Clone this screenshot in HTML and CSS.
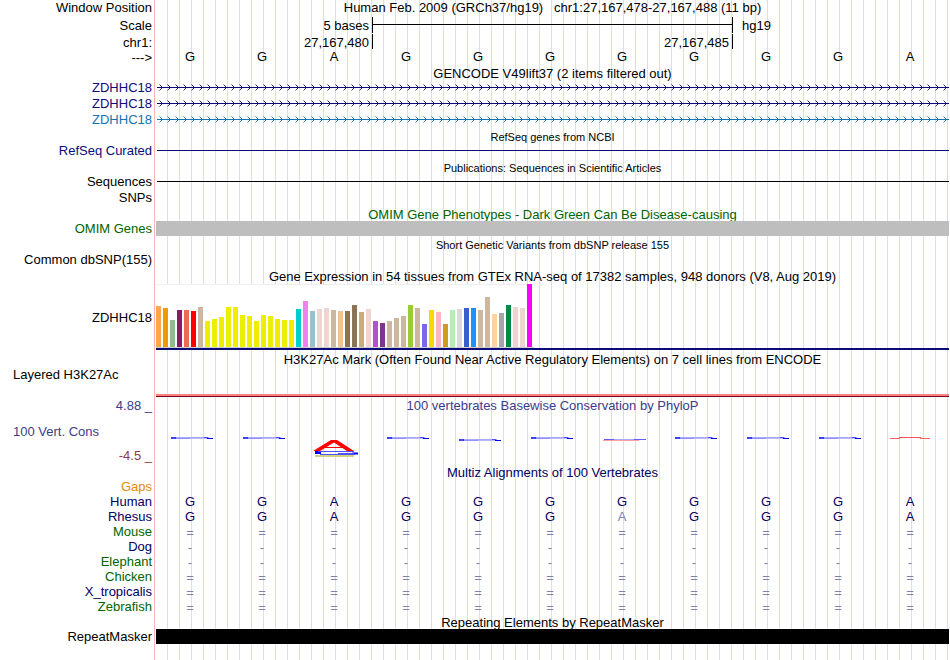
FILE: index.html
```html
<!DOCTYPE html>
<html lang="en">
<head>
<meta charset="utf-8">
<title>Human chr1:27,167,478-27,167,488</title>
<link rel="stylesheet" href="styles.css">
</head>
<body>
<main class="browser">
  <div class="row h17"><div class="label">Window Position</div><h1 class="plot title">Human Feb. 2009 (GRCh37/hg19) &nbsp; chr1:27,167,478-27,167,488 (11 bp)</h1></div>
  <div class="row h17 low"><div class="label">Scale</div><div class="plot ruler"><div class="mark">5 bases</div><div class="span"></div><div class="assembly">hg19</div></div></div>
  <div class="row h15 low"><div class="label">chr1:</div><div class="plot ruler"><div class="mark">27,167,480</div><div class="mark tick">27,167,485</div><div class="tick"></div></div></div>
  <div class="row h16"><div class="label low">---&gt;</div><div class="plot bases" data-bases="GGAGGGGGGGA"></div></div>
  <div class="row h15"><div></div><h2 class="plot title">GENCODE V49lift37 (2 items filtered out)</h2></div>
  <div class="row h16 navy"><div class="label">ZDHHC18</div><div class="plot gene"></div></div>
  <div class="row h16 navy"><div class="label">ZDHHC18</div><div class="plot gene"></div></div>
  <div class="row h16 teal"><div class="label">ZDHHC18</div><div class="plot gene"></div></div>
  <div class="row h15"><div></div><h2 class="plot title small">RefSeq genes from NCBI</h2></div>
  <div class="row h16 navy"><div class="label">RefSeq Curated</div><div class="plot line"></div></div>
  <div class="row h15"><div></div><h2 class="plot title small">Publications: Sequences in Scientific Articles</h2></div>
  <div class="row h16"><div class="label">Sequences</div><div class="plot line"></div></div>
  <div class="row h16"><div class="label">SNPs</div><div class="plot"></div></div>
  <div class="row h15 green"><div></div><h2 class="plot title">OMIM Gene Phenotypes - Dark Green Can Be Disease-causing</h2></div>
  <div class="row h15 green"><div class="label">OMIM Genes</div><div class="plot block gray"></div></div>
  <div class="row h16"><div></div><h2 class="plot title small">Short Genetic Variants from dbSNP release 155</h2></div>
  <div class="row h16"><div class="label">Common dbSNP(155)</div><div class="plot"></div></div>
  <div class="row h16"><div></div><h2 class="plot title">Gene Expression in 54 tissues from GTEx RNA-seq of 17382 samples, 948 donors (V8, Aug 2019)</h2></div>
  <div class="row expression"><div class="label">ZDHHC18</div><div class="plot"><div class="chart" id="chart"></div></div></div>
  <div class="row h15"><div></div><h2 class="plot title">H3K27Ac Mark (Often Found Near Active Regulatory Elements) on 7 cell lines from ENCODE</h2></div>
  <div class="row histone low"><div class="label wide">Layered H3K27Ac</div><div class="plot signal"></div></div>
  <div class="row conservation">
    <div class="scale"><div class="label low">4.88 _</div><div class="label wide">100 Vert. Cons</div><div class="label minimum">-4.5 _</div></div>
    <div class="plot"><h2 class="title">100 vertebrates Basewise Conservation by PhyloP</h2><div class="bases logo" id="logo"></div></div>
  </div>
  <div class="row h15 ink"><div></div><h2 class="plot title">Multiz Alignments of 100 Vertebrates</h2></div>
  <div class="row h15 orange"><div class="label">Gaps</div><div class="plot"></div></div>
  <div class="row h15 ink"><div class="label">Human</div><div class="plot bases" data-bases="GGAGGGGGGGA"></div></div>
  <div class="row h15 ink"><div class="label">Rhesus</div><div class="plot bases" data-bases="GGAGGGaGGGA"></div></div>
  <div class="row h15 green"><div class="label">Mouse</div><div class="plot bases" data-bases="==========="></div></div>
  <div class="row h15 ink"><div class="label">Dog</div><div class="plot bases" data-bases="-----------"></div></div>
  <div class="row h15 green"><div class="label">Elephant</div><div class="plot bases" data-bases="-----------"></div></div>
  <div class="row h15 green"><div class="label">Chicken</div><div class="plot bases" data-bases="==========="></div></div>
  <div class="row h15 ink"><div class="label">X_tropicalis</div><div class="plot bases" data-bases="==========="></div></div>
  <div class="row h15 green"><div class="label">Zebrafish</div><div class="plot bases" data-bases="==========="></div></div>
  <div class="row h15"><div></div><h2 class="plot title">Repeating Elements by RepeatMasker</h2></div>
  <div class="row h15"><div class="label">RepeatMasker</div><div class="plot block black"></div></div>
</main>
<script src="script.js"></script>
</body>
</html>
```
FILE: styles.css
```css
* { box-sizing: border-box; }
body {
  margin: 0;
  background: #fff;
  color: #000;
  font: 13px/16px "Liberation Sans", Arial, sans-serif;
}
.browser {
  display: flex;
  flex-direction: column;
  min-height: 100vh;
  padding-right: 1px;
  background:
    linear-gradient(#ffb4b4, #ffb4b4) 154px 0 / 1px 100% no-repeat,
    repeating-linear-gradient(to right, transparent 0 11px, #dcdcfa 11px 12px) 156px 0 / calc(100% - 157px) 100% no-repeat;
}
.row {
  display: grid;
  grid-template-columns: 156px minmax(0, 1fr);
  grid-template-rows: 100%;
  flex: none;
}
.h15 { height: 15px; }
.h16 { height: 16px; }
.h17 { height: 17px; }
.low { line-height: 18px; }
.label { padding-right: 4px; text-align: right; white-space: nowrap; }
.label.wide { padding-left: 13px; text-align: left; }
.title { margin: 0; font-size: 13px; font-weight: 400; text-align: center; white-space: nowrap; }
h2.title { line-height: 18px; }
h2.small { font-size: 11px; }

.navy { color: #0c0c78; }
.teal { color: #1474b0; }
.green { color: #006400; }
.ink { color: #000064; }
.orange { color: #e68a00; }

.ruler {
  display: grid;
  grid-template-columns: 3fr 5fr 3fr;
  grid-template-rows: 100%;
  margin-right: 1px;
}
.mark { padding-right: 3px; text-align: right; }
.span {
  height: 16px;
  border-left: 1px solid #000;
  background: linear-gradient(#000, #000) 0 7px / 100% 1px no-repeat;
}
.assembly, .tick { border-left: 1px solid #000; }
.assembly { height: 16px; padding-left: 9px; }

.bases {
  display: grid;
  grid-template-columns: repeat(11, 1fr);
  margin: 0 3px 0 -2px;
  text-align: center;
}
.faint, .mismatch { color: #8080b0; }
.faint { line-height: 18px; }

.gene, .line { margin-left: 1px; }
.gene svg { display: block; width: 100%; height: 16px; }
.line { background: linear-gradient(currentColor, currentColor) 0 7px / 100% 1px no-repeat; }
.gray { background: #bebebe; }
.black { background: #000; }

.expression { height: 67px; align-items: center; }
.expression .plot { align-self: start; border-bottom: 2px solid #0c0c78; }
.chart {
  display: flex;
  align-items: flex-end;
  gap: 2px;
  width: 378px;
  height: 64px;
  border-bottom: 1px solid #ccc;
  background: linear-gradient(#eee, #eee) 0 0 / 100% 1px no-repeat #fff;
}
.bar { width: 5px; }

.histone { height: 31px; }
.signal { align-self: end; height: 3px; border-top: 2px solid #ff8080; background: #780020; }

.conservation { height: 67px; color: #3c3c8c; }
.scale { display: flex; flex-direction: column; justify-content: space-between; }
.minimum { color: #8c3c3c; }
.logo { margin-top: 17px; }
.logo svg { display: block; width: 100%; height: 30px; }
```
FILE: script.js
```js
const SVG = 'http://www.w3.org/2000/svg';

// Bases under each 11-column row; lower case marks a mismatch.
document.querySelectorAll('[data-bases]').forEach(row => {
  for (const base of row.dataset.bases) {
    const cell = document.createElement('span');
    cell.textContent = base.toUpperCase();
    if (base === 'a') cell.className = 'mismatch';
    else if (!/[A-Z]/.test(base)) cell.className = 'faint';
    row.append(cell);
  }
});

// Intron lines with strand arrows every 8px.
document.querySelectorAll('.gene').forEach((gene, i) => {
  gene.innerHTML = `<svg xmlns="${SVG}" aria-hidden="true"><defs><pattern id="arrow${i}" width="8" height="16" patternUnits="userSpaceOnUse"><path d="M2.5 4.5L5.5 7.5L2.5 10.5" fill="none" stroke="currentColor" stroke-width="0.9"/></pattern></defs><rect width="100%" height="16" fill="url(#arrow${i})"/><rect y="7" width="100%" height="1" fill="currentColor"/></svg>`;
});

// GTEx tissues: [height, colour].
const yellow = [26, 28, 30, 40, 40, 32, 31, 26, 32, 31, 28, 27, 27].map(h => [h, '#eeee00']);
const tissues = [
  [41, '#ffa54f'], [39, '#ee9a00'], [27, '#8fbc8f'], [37, '#8b1c62'], [37, '#ee6a50'],
  [36, '#ff0000'], [40, '#cdb79e'], ...yellow,
  [38, '#00cdcd'], [46, '#ee82ee'], [36, '#9ac0cd'], [38, '#eed5d2'], [39, '#eed5d2'],
  [37, '#cdb79e'], [36, '#eec591'], [36, '#8b7355'], [42, '#8b7355'], [35, '#cdaa7d'],
  [38, '#eed5d2'], [26, '#b452cd'], [24, '#7a378b'], [26, '#cdb79e'], [29, '#cdb79e'],
  [31, '#cdb79e'], [42, '#9acd32'], [39, '#cdb79e'], [23, '#7a67ee'], [37, '#ffd700'],
  [35, '#ffb6c1'], [23, '#cd9b1d'], [37, '#b4eeb4'], [38, '#d9d9d9'], [39, '#3a5fcd'],
  [39, '#1e90ff'], [37, '#cdb79e'], [50, '#cdb79e'], [33, '#ffd39b'], [34, '#a6a6a6'],
  [42, '#008b45'], [40, '#eed5d2'], [39, '#eed5d2'], [63, '#ff00ff']
];
document.getElementById('chart').innerHTML = tissues
  .map(([h, c]) => `<div class="bar" style="height:${h}px;background:${c}"></div>`).join('');

// Conservation logo glyphs, flattened by their scores.
const flat = y => `<g transform="translate(16 ${y})">
  <rect x="1" width="38" height="1" fill="#a8a8ff"/>
  <rect x="1" width="5" height="2" fill="#4040ff"/>
  <rect x="6" y="1" width="14" height="1" fill="#9090ff"/>
  <rect x="34" width="4" height="1" fill="#5050ff"/>
  <rect x="20" y="1" width="17" height="1" fill="#b8b8ff"/>
  <rect x="37" y="1" width="6" height="1" fill="#0000e0"/></g>`;
const shapes = {
  g: flat(5),
  l: flat(7),
  m: '<path d="M18 7.5H60" stroke="#6060ff"/><path d="M28 7.5H48" stroke="#a8a8ff"/><path d="M17 8.5H53" stroke="#ffa0a0"/>',
  r: '<path d="M16 6.5H26M46 6.5H56" stroke="#ff6060"/><path d="M25 5.5H47" stroke="#ff5050"/>',
  a: `<path d="M17 24H56" stroke="#d0d088" stroke-width="2"/>
    <path d="M17 20.5H23" stroke="#0000ff" stroke-width="3"/><path d="M54 21.5H60" stroke="#0000ff" stroke-width="2"/>
    <path d="M20 19.5H56M40 21.5H56M22 22.5H57" fill="none" stroke="#5050ff"/>
    <path d="M15 19L33 8H39L56 19H49L36 10.5L22 19Z" fill="#ff0000"/><path d="M27 15.5H45" stroke="#ff0000"/>`
};
document.getElementById('logo').innerHTML = [...'ggaglgmgggr']
  .map(s => `<svg viewBox="0 0 72 30" aria-hidden="true">${shapes[s]}</svg>`).join('');
```
